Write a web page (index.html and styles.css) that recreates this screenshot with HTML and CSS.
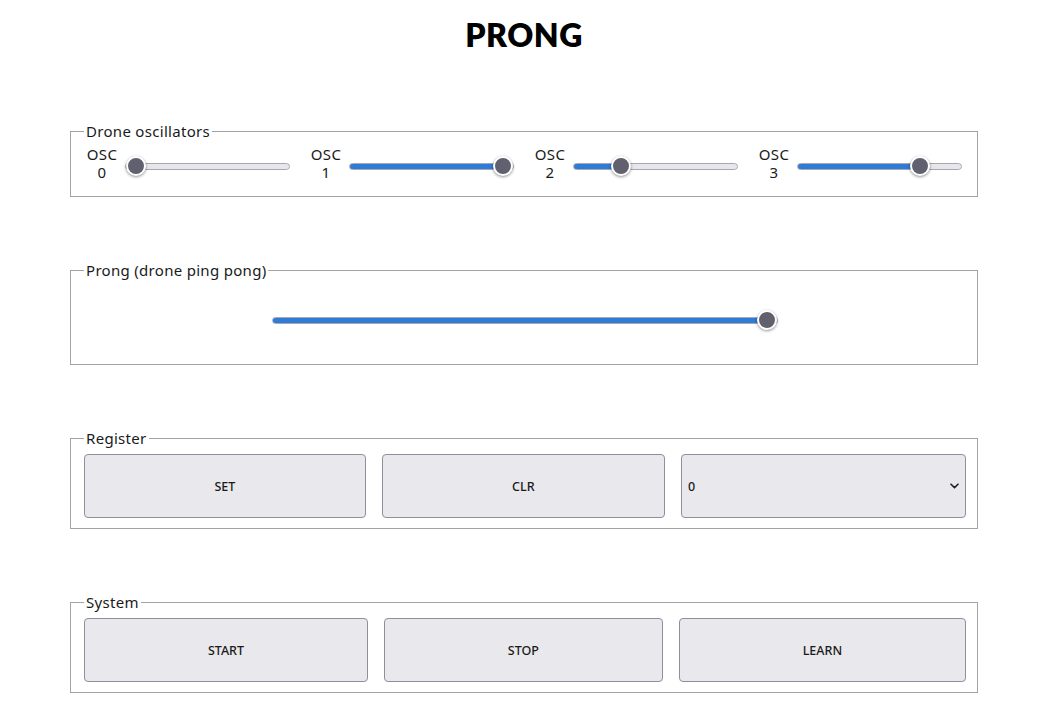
FILE: index.html
```html
<!DOCTYPE html>
<html lang="en">
<head>
<meta charset="utf-8">
<title>PRONG</title>
<link rel="stylesheet" href="styles.css">
</head>
<body>
<h1 class="title">PRONG</h1>
<main class="panel">
  <fieldset class="group osc-group">
    <legend>Drone oscillators</legend>
    <div class="osc-row">
      <div class="osc"><label class="osc-label">OSC<br>0</label><input type="range" class="slider" min="0" max="100" value="0" style="--v:0"></div>
      <div class="osc"><label class="osc-label">OSC<br>1</label><input type="range" class="slider" min="0" max="100" value="100" style="--v:1"></div>
      <div class="osc"><label class="osc-label">OSC<br>2</label><input type="range" class="slider" min="0" max="100" value="26" style="--v:0.26"></div>
      <div class="osc"><label class="osc-label">OSC<br>3</label><input type="range" class="slider" min="0" max="100" value="78" style="--v:0.78"></div>
    </div>
  </fieldset>

  <fieldset class="group prong-group">
    <legend>Prong (drone ping pong)</legend>
    <div class="prong-row">
      <input type="range" class="slider wide" min="0" max="100" value="100" style="--v:1">
    </div>
  </fieldset>

  <fieldset class="group">
    <legend>Register</legend>
    <div class="btn-row">
      <button class="btn">SET</button>
      <button class="btn">CLR</button>
      <div class="select-wrap">
        <select class="btn select">
          <option>0</option>
          <option>1</option>
          <option>2</option>
          <option>3</option>
        </select>
        <svg class="chevron" width="9" height="6" viewBox="0 0 9 6" aria-hidden="true">
          <path d="M1 1.2 L4.5 4.6 L8 1.2" fill="none" stroke="#222" stroke-width="1.6" stroke-linecap="round" stroke-linejoin="round"/>
        </svg>
      </div>
    </div>
  </fieldset>

  <fieldset class="group system-group">
    <legend>System</legend>
    <div class="btn-row">
      <button class="btn">START</button>
      <button class="btn">STOP</button>
      <button class="btn">LEARN</button>
    </div>
  </fieldset>
</main>
</body>
</html>
```

FILE: styles.css
```css
* { box-sizing: border-box; }

body {
  margin: 0;
  padding: 8px 0 0;
  background: #ffffff;
  color: #1a1a1a;
  font-family: "Noto Sans", "Open Sans", sans-serif;
}

.title {
  margin: 8px 0 0;
  text-align: center;
  font-family: Lato, "Noto Sans", sans-serif;
  font-size: 32px;
  font-weight: 800;
  line-height: 38px;
  letter-spacing: 0.5px;
  color: #000;
}

.panel {
  width: 908px;
  margin: 0 auto;
  padding-top: 68px;
}

.group {
  margin: 0 0 64px;
  padding: 0 11px 9px 13px;
  border: 1px solid #a3a3a3;
  min-width: 0;
}

.system-group {
  margin-top: 1px;
  margin-bottom: 10px;
}

.group legend {
  padding: 0 2px;
  margin-left: 0;
  font-size: 15px;
  line-height: 18px;
  letter-spacing: 0.3px;
  color: #1a1a1a;
}

.osc-row {
  display: flex;
  gap: 18px;
  padding: 5px 0 6px 0;
}

.osc {
  display: flex;
  align-items: center;
  gap: 5px;
}

.osc-label {
  width: 36px;
  text-align: center;
  font-size: 15px;
  line-height: 18px;
  letter-spacing: 0.3px;
}

.osc .slider {
  margin-top: 6px;
}

.slider {
  -webkit-appearance: none;
  appearance: none;
  width: 165px;
  height: 22px;
  margin: 0;
  background: transparent;
  --fill: #2f7bd8;
  --rest: #e6e6eb;
}

.slider::-webkit-slider-runnable-track {
  height: 7px;
  border-radius: 4px;
  border: 1px solid #a7a7b0;
  background: linear-gradient(to right, var(--fill) calc(9px + (100% - 18px) * var(--v)), var(--rest) 0);
}

.slider::-webkit-slider-thumb {
  -webkit-appearance: none;
  appearance: none;
  width: 20px;
  height: 20px;
  margin-top: -8px;
  border-radius: 50%;
  background: #60606e;
  border: 2px solid #ffffff;
  box-shadow: 0 1px 3px rgba(0, 0, 0, 0.45);
}

.prong-row {
  display: flex;
  justify-content: center;
  padding: 30px 0 24px;
}

.slider.wide {
  width: 506px;
}

.btn-row {
  display: flex;
  gap: 16px;
  padding-top: 7px;
  padding-bottom: 1px;
}

.btn {
  flex: 1 1 auto;
  height: 64px;
  margin: 0;
  padding: 0 10px;
  background-color: #e8e8ed;
  border: 1px solid #8f8f9b;
  border-radius: 4px;
  font-family: "Noto Sans", "Open Sans", sans-serif;
  font-size: 12.5px;
  font-weight: 500;
  color: #1a1a1a;
}

.select-wrap {
  position: relative;
  flex: 0 0 285px;
}

.select {
  -webkit-appearance: none;
  appearance: none;
  width: 100%;
  padding: 0 6px;
  text-align: left;
}

.chevron {
  position: absolute;
  right: 7px;
  top: 29px;
  pointer-events: none;
}
```
